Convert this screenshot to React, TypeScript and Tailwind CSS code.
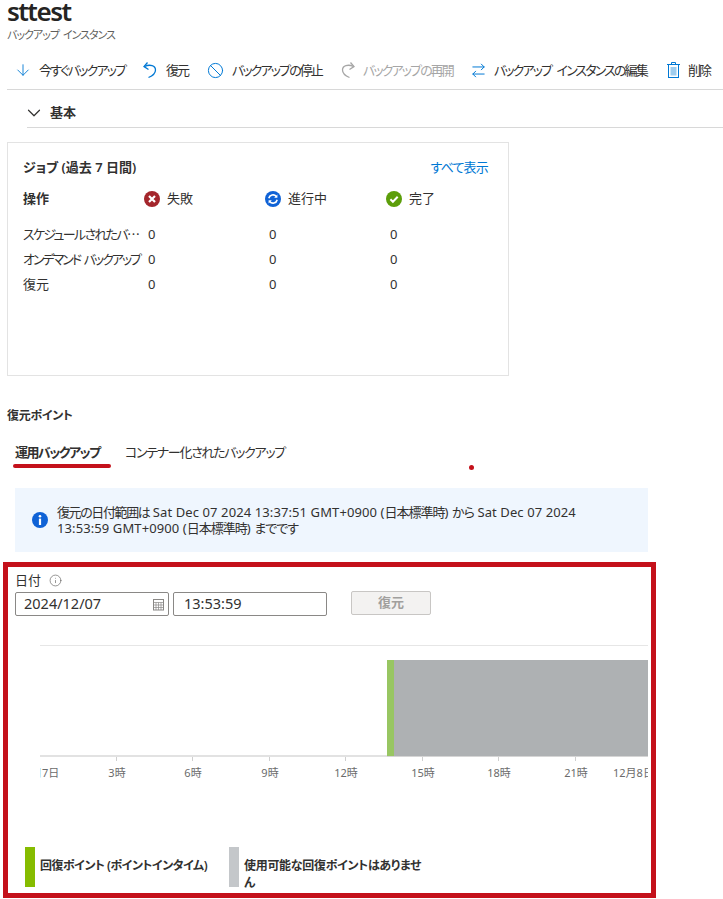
import { ArrowDown, ArrowRightLeft, Ban, ChevronDown, Info } from 'lucide-react';

const font = "font-['Noto_Sans','Noto_Sans_CJK_JP',sans-serif] [font-feature-settings:'palt']";

const ticks = [
  { x: 116, label: '3時' },
  { x: 192, label: '6時' },
  { x: 269, label: '9時' },
  { x: 345, label: '12時' },
  { x: 422, label: '15時' },
  { x: 498, label: '18時' },
  { x: 575, label: '21時' },
];

const rows = [
  { name: 'スケジュールされたバ⋯', cls: 'tracking-[-1.7px]' },
  { name: 'オンデマンド バックアップ', cls: 'tracking-[-2px] [word-spacing:2px]' },
  { name: '復元', cls: '' },
];

function StatusIcon({ kind }: { kind: 'fail' | 'run' | 'done' }) {
  if (kind === 'fail') {
    return (
      <svg width="16" height="16" viewBox="0 0 16 16">
        <circle cx="8" cy="8" r="8" fill="#a4262c" />
        <path d="M5 5l6 6M11 5l-6 6" stroke="#fff" strokeWidth="2.2" />
      </svg>
    );
  }
  if (kind === 'run') {
    return (
      <svg width="16" height="16" viewBox="0 0 16 16" fill="none">
        <circle cx="8" cy="8" r="8" fill="#0f62d6" />
        <path d="M3.8 7.2A4.3 4.3 0 0 1 11.3 5.4" stroke="#fff" strokeWidth="1.6" />
        <path d="M12.2 8.8A4.3 4.3 0 0 1 4.7 10.6" stroke="#fff" strokeWidth="1.6" />
        <path d="M12.4 3.6v3.2H9.2zM3.6 12.4V9.2h3.2z" fill="#fff" />
      </svg>
    );
  }
  return (
    <svg width="16" height="16" viewBox="0 0 16 16" fill="none">
      <circle cx="8" cy="8" r="8" fill="#5c9e0a" />
      <path d="M4.4 8.2l2.5 2.5 4.8-5" stroke="#fff" strokeWidth="2" />
    </svg>
  );
}

function HookArrow({ color, flip }: { color: string; flip?: boolean }) {
  return (
    <svg width="17" height="18" viewBox="0 0 17 18" fill="none" stroke={color} strokeWidth="1.3" className={flip ? '-scale-x-100' : ''}>
      <path d="M5.5 1.5L2 5.5l4.5 3" />
      <path d="M2.5 5.5C8 3 13.5 4.5 13.5 9c0 3.2-3 5.8-7 7.5" />
    </svg>
  );
}

function TrashIcon() {
  return (
    <svg width="17" height="18" viewBox="0 0 17 18" fill="none">
      <rect x="3.5" y="3.5" width="10" height="13" fill="#fff" stroke="#0078d4" />
      <rect x="5.5" y="6" width="6" height="8.5" fill="#9fcdee" />
      <path d="M2 3.5h13M6.5 3.5v-2h4v2" stroke="#0078d4" />
    </svg>
  );
}

function ToolItem({ icon, label, disabled, className }: { icon: React.ReactNode; label: string; disabled?: boolean; className: string }) {
  return (
    <div className={`flex items-center whitespace-nowrap ${className}`}>
      {icon}
      <span className={`text-[13px] leading-4 tracking-[-1.9px] [word-spacing:4px] ${disabled ? 'text-[#a6a6a6]' : 'text-[#323130]'}`}>{label}</span>
    </div>
  );
}

export default function App() {
  return (
    <div className={`${font} relative h-[899px] w-[723px] overflow-hidden bg-white text-[#323130]`}>
      <div className="pl-[7px]">
        <h1 className="h-[27px] text-[26px] leading-[22px] font-semibold tracking-[-1.5px] text-[#252423]">sttest</h1>
        <p className="text-[11px] leading-4 tracking-[-1px] [word-spacing:2px] text-[#605e5c]">バックアップ インスタンス</p>
      </div>

      <div className="mt-[8px] ml-[7px] flex h-[39px] items-center border-b border-[#d8d8d8] pl-[7px]">
        <ToolItem className="w-[128px] gap-[7px]" label="今すぐバックアップ" icon={<ArrowDown size={18} strokeWidth={1.2} className="text-[#0078d4]" />} />
        <ToolItem className="w-[65px] gap-[7px]" label="復元" icon={<HookArrow color="#0078d4" />} />
        <ToolItem className="w-[132px] gap-[8px]" label="バックアップの停止" icon={<Ban size={17} strokeWidth={1.4} className="text-[#0078d4]" />} />
        <ToolItem className="w-[131px] gap-[7px]" label="バックアップの再開" disabled icon={<HookArrow color="#a6a6a6" flip />} />
        <ToolItem className="w-[195px] gap-[7px]" label="バックアップ インスタンスの編集" icon={<ArrowRightLeft size={17} strokeWidth={1.4} className="text-[#0078d4]" />} />
        <ToolItem className="gap-[6px]" label="削除" icon={<TrashIcon />} />
      </div>

      <div className="ml-[27px] flex h-[38px] items-center border-b border-[#d8d8d8] pt-[8px]">
        <ChevronDown size={22} strokeWidth={1.3} className="-ml-[4px] text-[#323130]" />
        <span className="ml-[5px] text-[13px] font-semibold">基本</span>
      </div>

      <section className="mt-[14px] ml-[7px] h-[234px] w-[502px] border border-[#e3e3e3] px-[15px] pt-[15px]">
        <div className="flex items-center justify-between pr-[5px]">
          <span className="text-[13px] leading-[18px] font-semibold">ジョブ (過去 7 日間)</span>
          <span className="text-[13px] leading-[18px] tracking-[-0.8px] text-[#0078d4]">すべて表示</span>
        </div>
        <div className="mt-[13px] grid grid-cols-[121px_121px_121px_1fr] items-center">
          <span className="text-[13px] font-semibold">操作</span>
          <span className="flex items-center gap-[7px] text-[13px]"><StatusIcon kind="fail" />失敗</span>
          <span className="flex items-center gap-[7px] text-[13px]"><StatusIcon kind="run" />進行中</span>
          <span className="flex items-center gap-[7px] text-[13px]"><StatusIcon kind="done" />完了</span>
        </div>
        <div className="mt-[14px] flex flex-col">
          {rows.map((r) => (
            <div key={r.name} className="grid h-[25px] grid-cols-[125px_121px_121px_1fr] items-center text-[13px]">
              <span className={`whitespace-nowrap ${r.cls}`}>{r.name}</span>
              <span>0</span>
              <span>0</span>
              <span>0</span>
            </div>
          ))}
        </div>
      </section>

      <h2 className="mt-[32px] ml-[7px] text-[12px] leading-4 font-semibold tracking-[-0.3px]">復元ポイント</h2>

      <div className="mt-[19px] ml-[13px] flex items-start whitespace-nowrap">
        <div className="flex w-[98px] flex-col">
          <span className="pl-[2px] text-[13px] leading-[18px] font-semibold tracking-[-1.5px]">運用バックアップ</span>
          <span className="mt-[3px] h-[4px] rounded-full bg-[#c4111b]" />
        </div>
        <span className="ml-[14px] text-[13px] leading-[18px] tracking-[-1.3px]">コンテナー化されたバックアップ</span>
      </div>
      <span className="absolute top-[465px] left-[469px] h-[5px] w-[5px] rounded-full bg-[#c4111b]" />

      <div className="mt-[20px] ml-[15px] flex h-[64px] w-[633px] items-center gap-[9px] bg-[#eff6fe] pr-[48px] pl-[17px]">
        <svg width="16" height="16" viewBox="0 0 16 16" className="shrink-0">
          <circle cx="8" cy="8" r="8" fill="#0f62d6" />
          <circle cx="8" cy="4.2" r="1.3" fill="#fff" />
          <rect x="6.9" y="6.6" width="2.2" height="6.4" fill="#fff" />
        </svg>
        <p className="text-[13px] leading-4 tracking-[0.1px]">
          <span className="tracking-[-1.4px]">復元の日付範囲は</span> Sat Dec 07 2024 13:37:51 GMT+0900 (<span className="tracking-[-1px]">日本標準時</span>) <span className="tracking-[-1px]">から</span> Sat Dec 07 2024 13:53:59 GMT+0900 (<span className="tracking-[-1px]">日本標準時</span>) <span className="tracking-[-1px]">までです</span>
        </p>
      </div>

      <div className="mt-[10px] ml-[3px] h-[336px] w-[653px] border-[5px] border-[#c4111b] pt-[4px] pl-[7px]">
        <div className="flex items-center gap-[8px] text-[13px] leading-[18px]">
          日付
          <Info size={13} strokeWidth={1.2} className="text-[#605e5c]" />
        </div>
        <div className="mt-[3px] flex items-center">
          <div className="flex h-[24px] w-[154px] items-center justify-between rounded-[2px] border border-[#8a8886] pr-[3px] pl-[8px] text-[14.5px]">
            2024/12/07
            <svg width="13" height="13" viewBox="0 0 13 13" fill="none" stroke="#8a8886">
              <rect x="1.5" y="1.5" width="10" height="10.5" />
              <path d="M1.5 4.5h10M1.5 7h10M1.5 9.5h10M4 4.5V12M6.5 4.5V12M9 4.5V12" strokeWidth="0.7" />
            </svg>
          </div>
          <div className="ml-[4px] flex h-[24px] w-[154px] items-center rounded-[2px] border border-[#8a8886] pl-[10px] text-[14.5px]">13:53:59</div>
          <div className="mt-[-2px] ml-[24px] flex h-[24px] w-[80px] items-center justify-center rounded-[2px] border border-[#c8c6c4] bg-[#f3f2f1] text-[13px] font-semibold text-[#a19f9d]">復元</div>
        </div>

        <svg width="640" height="140" viewBox="8 640 640 140" className="mt-[24px] -ml-[7px] block">
          <defs>
            <clipPath id="plot">
              <rect x="40" y="640" width="608" height="140" />
            </clipPath>
          </defs>
          <rect x="40" y="645" width="608" height="1" fill="#e6e6e6" />
          <rect x="387" y="660" width="7" height="96" fill="#98c662" />
          <rect x="394" y="660" width="254" height="96" fill="#aeb1b3" />
          <rect x="40" y="755" width="347" height="2" fill="#e2e2e2" />
          <rect x="387" y="756" width="261" height="1" fill="#d5d5d5" />
          <g clipPath="url(#plot)" fontSize="11" fill="#6b6b6b">
            {ticks.map((t) => (
              <g key={t.label}>
                <rect x={t.x} y="757" width="1" height="4" fill="#cfcfcf" />
                <text x={t.x + 1} y="777" textAnchor="middle">{t.label}</text>
              </g>
            ))}
            <text x="31" y="777">月7日</text>
            <text x="613" y="777">12月8日</text>
          </g>
        </svg>

        <div className="mt-[67px] flex items-start">
          <div className="flex w-[214px] items-start pl-[10px]">
            <span className="h-[40px] w-[10px] shrink-0 bg-[#86bc00]" />
            <span className="mt-[10px] ml-[5px] text-[12px] leading-[18px] font-semibold tracking-[-0.5px] whitespace-nowrap">回復ポイント (ポイントインタイム)</span>
          </div>
          <div className="flex items-start">
            <span className="h-[40px] w-[10px] shrink-0 bg-[#c4c7ca]" />
            <span className="mt-[10px] ml-[5px] w-[181px] text-[12px] leading-[17px] font-semibold tracking-[-0.3px]">使用可能な回復ポイントはありません</span>
          </div>
        </div>
      </div>
    </div>
  );
}
